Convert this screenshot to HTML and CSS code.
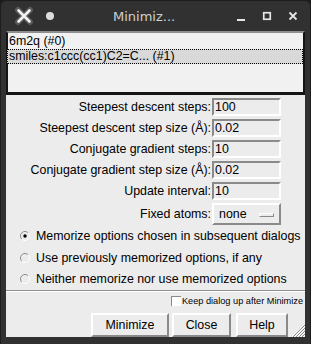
FILE: index.html
```html
<!DOCTYPE html>
<html lang="en">
<head>
  <meta charset="UTF-8">
  <title>Minimize</title>
  <link rel="stylesheet" href="styles.css">
</head>
<body>
  <div class="window">
    <div class="titlebar">
      <svg class="tb-close" width="20" height="20" viewBox="0 0 20 20">
        <path d="M4 4 L16 16 M16 4 L4 16" stroke="#5a5a5a" stroke-width="6" stroke-linecap="round"/>
        <path d="M4.5 4.5 L15.5 15.5 M15.5 4.5 L4.5 15.5" stroke="#f2f2f2" stroke-width="2.6" stroke-linecap="round"/>
      </svg>
      <span class="tb-dot"></span>
      <span class="tb-title">Minimiz...</span>
      <svg class="tb-btn" width="12" height="12" viewBox="0 0 12 12"><rect x="2" y="9" width="8" height="2" fill="#e6e6e6"/></svg>
      <svg class="tb-btn" width="12" height="12" viewBox="0 0 12 12"><rect x="2.75" y="2.75" width="6.5" height="6.5" fill="none" stroke="#e6e6e6" stroke-width="1.7"/></svg>
      <svg class="tb-btn" width="12" height="12" viewBox="0 0 12 12"><path d="M2.5 2.5 L9.5 9.5 M9.5 2.5 L2.5 9.5" stroke="#e6e6e6" stroke-width="1.8"/></svg>
    </div>

    <div class="content">
      <div class="listbox">
        <div class="list-item">6m2q (#0)</div>
        <div class="list-item selected">smiles:c1ccc(cc1)C2=C... (#1)</div>
      </div>

      <div class="options">
        <label class="opt-label">Steepest descent steps:</label>
        <div class="entry">100</div>
        <label class="opt-label">Steepest descent step size (Å):</label>
        <div class="entry">0.02</div>
        <label class="opt-label">Conjugate gradient steps:</label>
        <div class="entry">10</div>
        <label class="opt-label">Conjugate gradient step size (Å):</label>
        <div class="entry">0.02</div>
        <label class="opt-label">Update interval:</label>
        <div class="entry">10</div>
        <label class="opt-label menu-label">Fixed atoms:</label>
        <div class="menubutton">none<span class="indicator"></span></div>
      </div>

      <div class="radios">
        <div class="radio-row">
          <svg class="radio" width="10" height="10" viewBox="0 0 10 10">
            <path d="M8.2 1.8 A4.5 4.5 0 0 0 1.8 8.2" fill="none" stroke="#8a8a8a" stroke-width="1"/>
            <path d="M1.8 8.2 A4.5 4.5 0 0 0 8.2 1.8" fill="none" stroke="#ffffff" stroke-width="1"/>
            <circle cx="5" cy="5" r="3.6" fill="#ececec"/>
            <circle cx="5" cy="5" r="1.7" fill="#000"/>
          </svg>
          <span>Memorize options chosen in subsequent dialogs</span>
        </div>
        <div class="radio-row">
          <svg class="radio" width="10" height="10" viewBox="0 0 10 10">
            <path d="M8.2 1.8 A4.5 4.5 0 0 0 1.8 8.2" fill="none" stroke="#8a8a8a" stroke-width="1"/>
            <path d="M1.8 8.2 A4.5 4.5 0 0 0 8.2 1.8" fill="none" stroke="#ffffff" stroke-width="1"/>
          </svg>
          <span>Use previously memorized options, if any</span>
        </div>
        <div class="radio-row">
          <svg class="radio" width="10" height="10" viewBox="0 0 10 10">
            <path d="M8.2 1.8 A4.5 4.5 0 0 0 1.8 8.2" fill="none" stroke="#8a8a8a" stroke-width="1"/>
            <path d="M1.8 8.2 A4.5 4.5 0 0 0 8.2 1.8" fill="none" stroke="#ffffff" stroke-width="1"/>
          </svg>
          <span>Neither memorize nor use memorized options</span>
        </div>
      </div>

      <div class="separator"></div>

      <div class="keep-row">
        <span class="checkbox"></span>
        <span>Keep dialog up after Minimize</span>
      </div>

      <div class="buttons">
        <button class="btn btn-min">Minimize</button>
        <button class="btn btn-close">Close</button>
        <button class="btn btn-help">Help</button>
        <svg class="grip" width="13" height="13" viewBox="0 0 13 13">
          <path d="M13 1 L1 13 M13 4 L4 13 M13 7 L7 13 M13 10 L10 13" stroke="#8c8c8c" stroke-width="1"/>
          <path d="M13 2 L2 13 M13 5 L5 13 M13 8 L8 13 M13 11 L11 13" stroke="#ffffff" stroke-width="1"/>
        </svg>
      </div>
    </div>
  </div>
</body>
</html>
```

FILE: styles.css
```css
body {
  margin: 0;
  background-color: #1c1c1c;
  font-family: "Liberation Sans", Arial, sans-serif;
}

.window {
  width: 309px;
  height: 343px;
  background-color: #313131;
  border: 1px solid #1d1d1d;
  border-bottom: none;
  border-radius: 6px 6px 0 0;
  display: flex;
  flex-direction: column;
}

.titlebar {
  height: 30px;
  display: flex;
  align-items: center;
  padding-left: 13px;
  padding-right: 11px;
}

.tb-close {
  display: block;
}

.tb-dot {
  width: 8px;
  height: 8px;
  border-radius: 50%;
  background-color: #dcdcdc;
  margin-left: 12px;
}

.tb-title {
  flex: 1;
  font-family: "DejaVu Sans", sans-serif;
  font-size: 13px;
  color: #cfcfcf;
  padding-left: 59px;
}

.tb-btn {
  display: block;
  margin-left: 14px;
}

.content {
  margin: 0 5px 0 5px;
  height: 306px;
  background-color: #ececec;
  display: flex;
  flex-direction: column;
  font-size: 12.4px;
  color: #000;
}

.listbox {
  height: 57px;
  background-color: #f1f1f1;
  border: 2px solid #141414;
  border-top-color: #8e8e8e;
  border-bottom-width: 3px;
  padding-top: 2px;
}

.list-item {
  height: 13px;
  line-height: 13px;
  padding-left: 1px;
  margin-bottom: 1px;
  white-space: nowrap;
}

.list-item.selected {
  background-color: #d9d9d9;
  border: 1px dotted #000;
  margin-left: -1px;
  height: 13px;
}

.options {
  display: grid;
  grid-template-columns: 205px 69px;
  column-gap: 1px;
  row-gap: 3px;
  margin-top: 3px;
}

.opt-label {
  text-align: right;
  line-height: 18px;
  white-space: nowrap;
}

.entry {
  height: 14px;
  line-height: 14px;
  border: 2px solid #8a8a8a;
  border-right-color: #ffffff;
  border-bottom-color: #ffffff;
  padding-left: 1px;
}

.menu-label {
  line-height: 22px;
}

.menubutton {
  height: 18px;
  line-height: 18px;
  border: 2px solid #ffffff;
  border-right-color: #8a8a8a;
  border-bottom-color: #8a8a8a;
  padding-left: 5px;
  position: relative;
}

.indicator {
  position: absolute;
  right: 5px;
  top: 8px;
  width: 13px;
  height: 2px;
  border: 1px solid #ffffff;
  border-right-color: #8a8a8a;
  border-bottom-color: #8a8a8a;
}

.radios {
  display: flex;
  flex-direction: column;
  margin-top: 1px;
}

.radio-row {
  height: 21.5px;
  display: flex;
  align-items: center;
  padding-left: 14px;
}

.radio {
  margin-right: 6px;
}

.separator {
  height: 1px;
  background-color: #8f8f8f;
  border-bottom: 1px solid #ffffff;
}

.keep-row {
  display: flex;
  align-items: center;
  justify-content: flex-end;
  font-size: 9.2px;
  height: 18px;
  padding-right: 2px;
}

.checkbox {
  width: 9px;
  height: 9px;
  background-color: #ffffff;
  border-top: 1px solid #8a8a8a;
  border-left: 1px solid #8a8a8a;
  margin-right: 1px;
}

.buttons {
  display: flex;
  justify-content: flex-end;
  align-items: flex-end;
  margin-top: 3px;
  flex: 1;
}

.btn {
  height: 24px;
  font-family: "Liberation Sans", Arial, sans-serif;
  font-size: 12.4px;
  color: #000;
  background-color: #ececec;
  border: 2px solid #ffffff;
  border-right-color: #8a8a8a;
  border-bottom-color: #8a8a8a;
  padding: 0;
  margin-left: 3px;
  align-self: flex-start;
}

.btn-min {
  width: 78px;
}

.btn-close {
  width: 59px;
}

.btn-help {
  width: 52px;
  margin-left: 5px;
}

.grip {
  display: block;
  margin-left: 4px;
}
```
